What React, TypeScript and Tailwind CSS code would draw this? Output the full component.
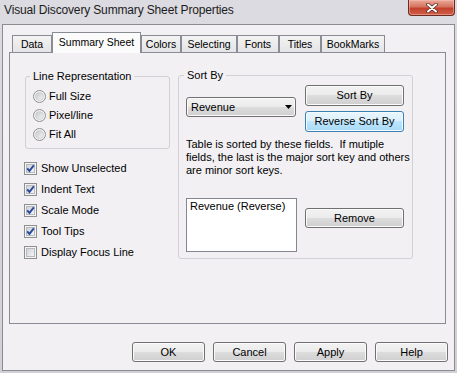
import React from 'react';

const btnBase =
  'rounded-[3px] border border-[#707070] bg-[linear-gradient(#f2f2f2,#ebebeb_50%,#dddddd_50%,#cfcfcf)] shadow-[inset_0_0_0_1px_#fbfbfb] text-[11px] leading-none text-black';
const btnFocus =
  'rounded-[3px] border border-[#3c7fb1] bg-[linear-gradient(#eaf6fd,#d9f0fc_50%,#bee6fd_50%,#a7d9f5)] shadow-[inset_0_0_0_1px_#f4fbff] text-[11px] leading-none text-black';

const Button: React.FC<{ label: string; className?: string; focused?: boolean }> = ({
  label,
  className = '',
  focused = false,
}) => (
  <button type="button" className={`${focused ? btnFocus : btnBase} ${className}`}>
    {label}
  </button>
);

const CheckBox: React.FC<{ label: string; checked?: boolean }> = ({ label, checked = false }) => (
  <div className="flex h-[21px] items-center gap-[4px]">
    <svg width="13" height="13" viewBox="0 0 13 13" className="shrink-0">
      <defs>
        <linearGradient id="cbFill" x1="0" y1="0" x2="1" y2="1">
          <stop offset="0" stopColor="#cdd0d6" />
          <stop offset="1" stopColor="#f7f7f8" />
        </linearGradient>
      </defs>
      <rect x="0.5" y="0.5" width="12" height="12" fill="#f4f4f4" stroke="#8e8f8f" />
      <rect x="2.5" y="2.5" width="8" height="8" fill="url(#cbFill)" stroke="#b6b9bf" />
      {checked && (
        <path d="M3.2 6.4 L5.4 8.9 L9.8 3.3" fill="none" stroke="#2a4a9e" strokeWidth="1.9" />
      )}
    </svg>
    <span className="text-[11px] leading-[13px]">{label}</span>
  </div>
);

const Radio: React.FC<{ label: string }> = ({ label }) => (
  <div className="flex h-[19px] items-center gap-[3px] pl-[7px]">
    <svg width="13" height="13" viewBox="0 0 13 13" className="shrink-0">
      <defs>
        <linearGradient id="rdFill" x1="0" y1="0" x2="1" y2="1">
          <stop offset="0" stopColor="#c4c7cc" />
          <stop offset="1" stopColor="#f5f5f6" />
        </linearGradient>
      </defs>
      <circle cx="6.5" cy="6.5" r="6" fill="#f3f3f3" stroke="#8e8f8f" />
      <circle cx="6.5" cy="6.5" r="4" fill="url(#rdFill)" stroke="#c9ccd1" strokeWidth="0.8" />
    </svg>
    <span className="text-[11px] leading-[13px]">{label}</span>
  </div>
);

const CloseButton: React.FC = () => (
  <div className="flex h-[16px] w-[47px] items-center justify-center rounded-b-[4px] border border-t-0 border-[#6e2b22] bg-[linear-gradient(#eaa99a,#d6735f_45%,#c2412c_55%,#d0604a)] shadow-[inset_0_0_0_1px_rgba(255,200,190,0.45)]">
    <svg width="12" height="10" viewBox="0 0 12 10">
      <path d="M2 1.5 L10 8.5 M10 1.5 L2 8.5" stroke="#5a2a24" strokeWidth="3.6" strokeLinecap="round" />
      <path d="M2 1.5 L10 8.5 M10 1.5 L2 8.5" stroke="#ffffff" strokeWidth="2" strokeLinecap="round" />
    </svg>
  </div>
);

const tabs = [
  { label: 'Data', w: 'w-[40px]' },
  { label: 'Summary Sheet', w: 'w-[89px]', active: true },
  { label: 'Colors', w: 'w-[40px]' },
  { label: 'Selecting', w: 'w-[56px]' },
  { label: 'Fonts', w: 'w-[42px]' },
  { label: 'Titles', w: 'w-[42px]' },
  { label: 'BookMarks', w: 'w-[64px]' },
];

export default function App() {
  return (
    <div className="flex h-[373px] w-[457px] flex-col bg-[linear-gradient(#dcdbe1,#d1d0d6)] px-[2px] pb-[2px] font-['Liberation_Sans',Arial,sans-serif] text-black">
      {/* Title bar */}
      <div className="flex h-[24px] shrink-0 items-start justify-between">
        <span className="ml-[2px] mt-[3px] text-[12px] leading-[15px] tracking-[-0.15px] text-[#1b1b1b]">
          Visual Discovery Summary Sheet Properties
        </span>
        <CloseButton />
      </div>

      {/* Client area */}
      <div className="flex flex-1 flex-col border border-[#8c8c90] bg-[#f2f0f3] pl-[6px] pt-[7px]">
        {/* Tabs */}
        <div className="flex h-[20px] items-end pl-[3px]">
          {tabs.map((t) =>
            t.active ? (
              <div
                key={t.label}
                className={`${t.w} relative z-10 -mb-px flex h-[21px] items-center justify-center border border-b-0 border-[#898c95] bg-[#fbfbfb] pb-px text-[10.5px] leading-none`}
              >
                {t.label}
              </div>
            ) : (
              <div
                key={t.label}
                className={`${t.w} flex h-[17px] items-center justify-center border border-b-0 border-[#898c95] bg-[linear-gradient(#f3f3f3,#e4e4e6)] text-[10.5px] leading-none`}
              >
                {t.label}
              </div>
            )
          )}
        </div>

        {/* Tab panel */}
        <div className="flex h-[272px] w-[437px] items-start border border-[#898c95] pl-[15px] pt-[17px]">
          {/* Left column */}
          <div className="flex flex-col">
            <fieldset className="h-[79px] w-[145px] rounded-[3px] border border-[#d0d0d5]">
              <legend className="ml-[4px] px-[3px] text-[11px] leading-[13px]">Line Representation</legend>
              <div className="mt-[4px] flex flex-col">
                <Radio label="Full Size" />
                <Radio label="Pixel/line" />
                <Radio label="Fit All" />
              </div>
            </fieldset>
            <div className="-ml-px mt-[9px] flex flex-col">
              <CheckBox label="Show Unselected" checked />
              <CheckBox label="Indent Text" checked />
              <CheckBox label="Scale Mode" checked />
              <CheckBox label="Tool Tips" checked />
              <CheckBox label="Display Focus Line" />
            </div>
          </div>

          {/* Sort By group */}
          <fieldset className="-mt-px ml-[8px] h-[190px] w-[235px] min-w-0 rounded-[3px] border border-[#d0d0d5]">
            <legend className="ml-[5px] px-[3px] text-[11px] leading-[13px]">Sort By</legend>
            <div className="flex flex-col pl-[7px]">
              <div className="mt-[3px] flex items-start gap-[9px]">
                <div className={`${btnBase} mt-[12px] flex h-[20px] w-[110px] items-center justify-between pl-[4px] pr-[3px]`}>
                  <span>Revenue</span>
                  <svg width="7" height="4" viewBox="0 0 7 4">
                    <path d="M0 0 H7 L3.5 4 Z" fill="#000" />
                  </svg>
                </div>
                <div className="flex flex-col gap-[5px]">
                  <Button label="Sort By" className="h-[21px] w-[99px]" />
                  <Button label="Reverse Sort By" className="h-[21px] w-[99px]" focused />
                </div>
              </div>
              <p className="mt-[6px] whitespace-nowrap text-[11px] leading-[13px]">
                Table is sorted by these fields.&nbsp; If mutiple
                <br />
                fields, the last is the major sort key and others
                <br />
                are minor sort keys.
              </p>
              <div className="mt-[21px] flex items-start gap-[8px]">
                <div className="h-[54px] w-[111px] border border-[#828790] bg-white pl-[3px] pt-px text-[11px] leading-[13px]">
                  Revenue (Reverse)
                </div>
                <Button label="Remove" className="mt-[10px] h-[20px] w-[99px]" />
              </div>
            </div>
          </fieldset>
        </div>

        {/* Dialog buttons */}
        <div className="mt-[18px] flex justify-end gap-[8px] pr-[6px]">
          <Button label="OK" className="h-[20px] w-[73px]" />
          <Button label="Cancel" className="h-[20px] w-[73px]" />
          <Button label="Apply" className="h-[20px] w-[73px]" />
          <Button label="Help" className="h-[20px] w-[73px]" />
        </div>
      </div>
    </div>
  );
}
